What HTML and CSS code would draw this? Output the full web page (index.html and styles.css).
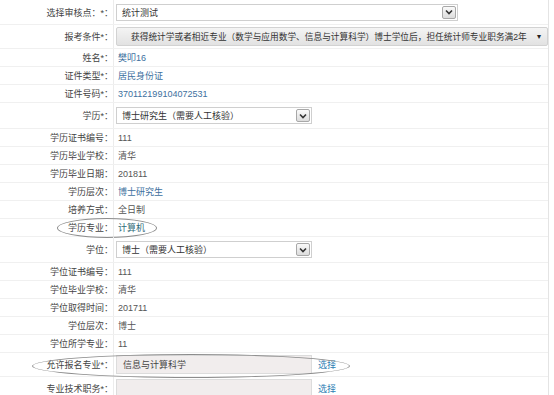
FILE: index.html
```html
<!DOCTYPE html>
<html lang="zh-CN">
<head>
  <meta charset="UTF-8" />
  <title>报名信息</title>
  <link rel="stylesheet" href="styles.css">
</head>
<body>
  <div class="form">

    <div class="row h25">
      <div class="label">选择审核点：*：</div>
      <div class="field">
        <div class="select select-long">统计测试
          <span class="select-btn"><svg width="8" height="6" viewBox="0 0 8 6"><path d="M1 1.5 L4 4.5 L7 1.5" fill="none" stroke="#333" stroke-width="1.6"/></svg></span>
        </div>
      </div>
    </div>

    <div class="row h24">
      <div class="label">报考条件*：</div>
      <div class="field">
        <div class="select-gray">获得统计学或者相近专业（数学与应用数学、信息与计算科学）博士学位后，担任统计师专业职务满2年<span class="caret">▾</span></div>
      </div>
    </div>

    <div class="row"><div class="label">姓名*：</div><div class="field value blue">樊叩16</div></div>
    <div class="row"><div class="label">证件类型*：</div><div class="field value blue">居民身份证</div></div>
    <div class="row"><div class="label">证件号码*：</div><div class="field value blue">370112199104072531</div></div>

    <div class="row h26">
      <div class="label">学历*：</div>
      <div class="field">
        <div class="select select-short">博士研究生（需要人工核验）
          <span class="select-btn"><svg width="8" height="6" viewBox="0 0 8 6"><path d="M1 1.5 L4 4.5 L7 1.5" fill="none" stroke="#333" stroke-width="1.6"/></svg></span>
        </div>
      </div>
    </div>

    <div class="row"><div class="label">学历证书编号：</div><div class="field value">111</div></div>
    <div class="row"><div class="label">学历毕业学校：</div><div class="field value">清华</div></div>
    <div class="row"><div class="label">学历毕业日期：</div><div class="field value">201811</div></div>
    <div class="row"><div class="label">学历层次：</div><div class="field value blue">博士研究生</div></div>
    <div class="row"><div class="label">培养方式：</div><div class="field value">全日制</div></div>
    <div class="row">
      <div class="label">学历专业：</div><div class="field value teal">计算机</div>
      <span class="ring ring-small"></span>
    </div>

    <div class="row h26">
      <div class="label">学位：</div>
      <div class="field">
        <div class="select select-short">博士（需要人工核验）
          <span class="select-btn"><svg width="8" height="6" viewBox="0 0 8 6"><path d="M1 1.5 L4 4.5 L7 1.5" fill="none" stroke="#333" stroke-width="1.6"/></svg></span>
        </div>
      </div>
    </div>

    <div class="row"><div class="label">学位证书编号：</div><div class="field value">111</div></div>
    <div class="row"><div class="label">学位毕业学校：</div><div class="field value">清华</div></div>
    <div class="row"><div class="label">学位取得时间：</div><div class="field value">201711</div></div>
    <div class="row"><div class="label">学位层次：</div><div class="field value">博士</div></div>
    <div class="row"><div class="label">学位所学专业：</div><div class="field value">11</div></div>

    <div class="row h24">
      <div class="label">允许报名专业*：</div>
      <div class="field">
        <div class="input">信息与计算科学</div>
        <a class="pick">选择</a>
      </div>
      <span class="ring ring-big"></span>
    </div>

    <div class="row h24">
      <div class="label">专业技术职务*：</div>
      <div class="field">
        <div class="input"></div>
        <a class="pick">选择</a>
      </div>
    </div>

  </div>
</body>
</html>
```

FILE: styles.css
```css
body {
  margin: 0;
  background-color: #fff;
  font-family: "Liberation Sans", "Noto Sans CJK SC", sans-serif;
  font-size: 9px;
  color: #444;
}

.form {
  width: 548px;
  border-right: 1px solid #e4e4e4;
}

.row {
  position: relative;
  display: flex;
  height: 18px;
  border-bottom: 1px solid #f0f0f0;
  box-sizing: border-box;
}

.h24 { height: 24px; }
.h25 { height: 25px; }
.h26 { height: 26px; }

.label {
  width: 113px;
  border-right: 1px solid #ececec;
  display: flex;
  align-items: center;
  justify-content: flex-end;
  color: #444;
  white-space: nowrap;
}

.field {
  flex: 1;
  display: flex;
  align-items: center;
  padding-left: 2px;
  gap: 6px;
  min-width: 0;
}

.value {
  padding-left: 4px;
  color: #555;
}

.value.blue { color: #3d6f9e; }
.value.teal { color: #2f6b78; }

.select {
  height: 17px;
  border: 1px solid #cfcfcf;
  background-color: #fff;
  display: flex;
  align-items: center;
  justify-content: space-between;
  padding-left: 5px;
  padding-right: 1px;
  box-sizing: border-box;
  color: #333;
}

.select-long { width: 342px; }
.select-short { width: 196px; }

.select-btn {
  width: 14px;
  height: 13px;
  border: 1px solid #a8a8a8;
  border-radius: 2px;
  background: linear-gradient(#fafafa, #dcdcdc);
  display: flex;
  align-items: center;
  justify-content: center;
  box-sizing: border-box;
}

.select-gray {
  flex: 1;
  height: 19px;
  border: 1px solid #d2d2d2;
  border-radius: 2px;
  background: linear-gradient(#f4f4f4, #e2e2e2);
  display: flex;
  align-items: center;
  justify-content: space-between;
  padding-left: 14px;
  padding-right: 6px;
  font-size: 8.7px;
  color: #333;
  white-space: nowrap;
  overflow: hidden;
  box-sizing: border-box;
}

.caret {
  font-size: 8px;
  color: #222;
}

.input {
  width: 196px;
  height: 19px;
  border: 1px solid #dcdcdc;
  background-color: #f1eded;
  display: flex;
  align-items: center;
  padding-left: 6px;
  box-sizing: border-box;
  color: #444;
}

.pick {
  color: #2b7db3;
  cursor: pointer;
}

.ring {
  position: absolute;
  border: 1px solid #8c8c8c;
  border-radius: 50%;
  pointer-events: none;
}

.ring-small {
  left: 57px;
  top: -1px;
  width: 98px;
  height: 18px;
}

.ring-big {
  left: 32px;
  top: 1px;
  width: 316px;
  height: 22px;
}
```
